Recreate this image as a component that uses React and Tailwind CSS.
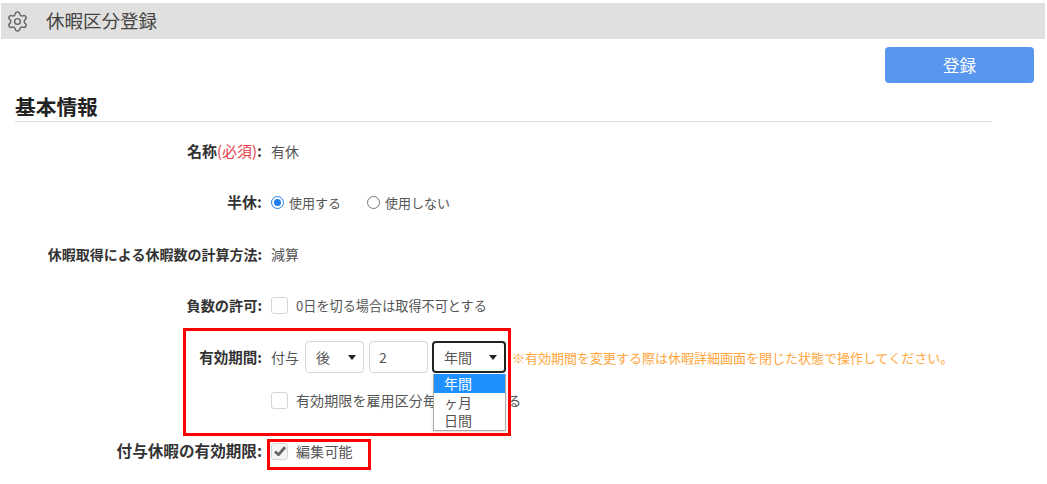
import { Settings } from 'lucide-react';

const font = { fontFamily: '"Noto Sans CJK JP", "Noto Sans", sans-serif' };

const Row = ({ label, className = '', labelClass = 'text-[14px]', children }) => (
  <div className={`flex items-center ${className}`}>
    <div className={`w-[262px] shrink-0 text-right font-bold whitespace-nowrap text-[#333] ${labelClass}`}>{label}</div>
    <div className="ml-[9px] flex items-center text-[14px] text-[#555]">{children}</div>
  </div>
);

const Checkbox = ({ checked }) => (
  <span className={`flex h-[17px] w-[17px] shrink-0 items-center justify-center rounded-[3px] border border-[#d5d5d5] ${checked ? 'bg-[#f4f4f4]' : 'bg-white'}`}>
    {checked && (
      <svg width="12" height="10" viewBox="0 0 12 10">
        <path d="M1 5.5l3.5 3.2L11 1.2" fill="none" stroke="#666" strokeWidth="2.8" />
      </svg>
    )}
  </span>
);

const Radio = ({ checked }) => (
  <span className={`flex h-[13px] w-[13px] items-center justify-center rounded-full border ${checked ? 'border-[#1e80f0]' : 'border-[#777]'}`}>
    {checked && <span className="h-[7px] w-[7px] rounded-full bg-[#1e80f0]" />}
  </span>
);

const Caret = () => (
  <span className="h-0 w-0 border-x-[4px] border-t-[5px] border-x-transparent border-t-[#222]" />
);

export default function App() {
  return (
    <div className="relative h-[484px] w-[1047px] overflow-hidden bg-white pt-[3px]" style={font}>
      <div className="mx-[1px] flex h-[36px] w-[1044px] items-center bg-[#e0e0de] pl-[5px]">
        <Settings size={23} strokeWidth={1.5} className="text-[#666]" />
        <span className="ml-[17px] text-[18.5px] text-[#444]">休暇区分登録</span>
      </div>

      <div className="mt-[8px] flex justify-end pr-[13px]">
        <button className="h-[36px] w-[149px] rounded-[4px] bg-[#5797f0] text-[16.5px] text-white">登録</button>
      </div>

      <div className="mx-[15px] mt-[9px] w-[977px] border-b border-[#dcdcdc] pb-[1px]">
        <h2 className="text-[20.7px] leading-[28px] font-bold text-[#222]">基本情報</h2>
      </div>

      <Row className="mt-[19px] h-[20px]" labelClass="text-[15px]" label={<>名称<span className="font-normal text-[#e8404a]">(必須)</span>:</>}>
        有休
      </Row>

      <Row className="mt-[31px] h-[20px] pt-[1px]" labelClass="text-[15px]" label="半休:">
        <Radio checked />
        <span className="ml-[5px] text-[13px]">使用する</span>
        <span className="ml-[26px]"><Radio /></span>
        <span className="ml-[5px] text-[13px]">使用しない</span>
      </Row>

      <Row className="mt-[32px] h-[20px]" label="休暇取得による休暇数の計算方法:">
        減算
      </Row>

      <Row className="mt-[32px] h-[20px]" labelClass="text-[14.2px]" label="負数の許可:">
        <Checkbox />
        <span className="ml-[8px] text-[13.15px]">0日を切る場合は取得不可とする</span>
      </Row>

      <Row className="mt-[25px] h-[32px]" labelClass="text-[14.5px]" label="有効期間:">
        付与
        <span className="ml-[6px] flex h-[32px] w-[59px] items-center justify-between rounded-[4px] border border-[#d5d5d5] pr-[7px] pl-[10px]">
          後<Caret />
        </span>
        <span className="ml-[5px] flex h-[32px] w-[59px] items-center rounded-[4px] border border-[#d5d5d5] pl-[9px]">2</span>
        <span className="ml-[4px] flex h-[32px] w-[74px] items-center justify-between rounded-[4px] border-2 border-[#222] pr-[7px] pl-[10px]">
          年間<Caret />
        </span>
        <span className="ml-[6px] pt-[1px] text-[13px] whitespace-nowrap text-[#ffa63d]">※有効期間を変更する際は休暇詳細画面を閉じた状態で操作してください。</span>
      </Row>

      <Row className="mt-[17px] h-[20px]" label="">
        <Checkbox />
        <span className="ml-[8px] tracking-[0.1px]">有効期限を雇用区分毎に設定できる</span>
      </Row>

      <Row className="mt-[31px] h-[20px]" labelClass="text-[15.6px]" label="付与休暇の有効期限:">
        <Checkbox checked />
        <span className="ml-[8px] tracking-[0.2px]">編集可能</span>
      </Row>

      {/* open select menu */}
      <div className="absolute top-[374px] left-[433px] w-[73px] border-x border-b border-[#aaa] bg-white text-[14px] text-[#555] shadow-sm">
        <div className="h-[19px] bg-[#1e90ff] pl-[10px] leading-[19px] text-white">年間</div>
        <div className="h-[18px] pl-[10px] leading-[18px]">ヶ月</div>
        <div className="h-[19px] pl-[10px] leading-[19px]">日間</div>
      </div>

      {/* annotation boxes */}
      <div className="absolute top-[328px] left-[183px] h-[108px] w-[328px] border-[3px] border-[#f00]" />
      <div className="absolute top-[439px] left-[267px] h-[31px] w-[104px] border-[3px] border-[#f00]" />
    </div>
  );
}
